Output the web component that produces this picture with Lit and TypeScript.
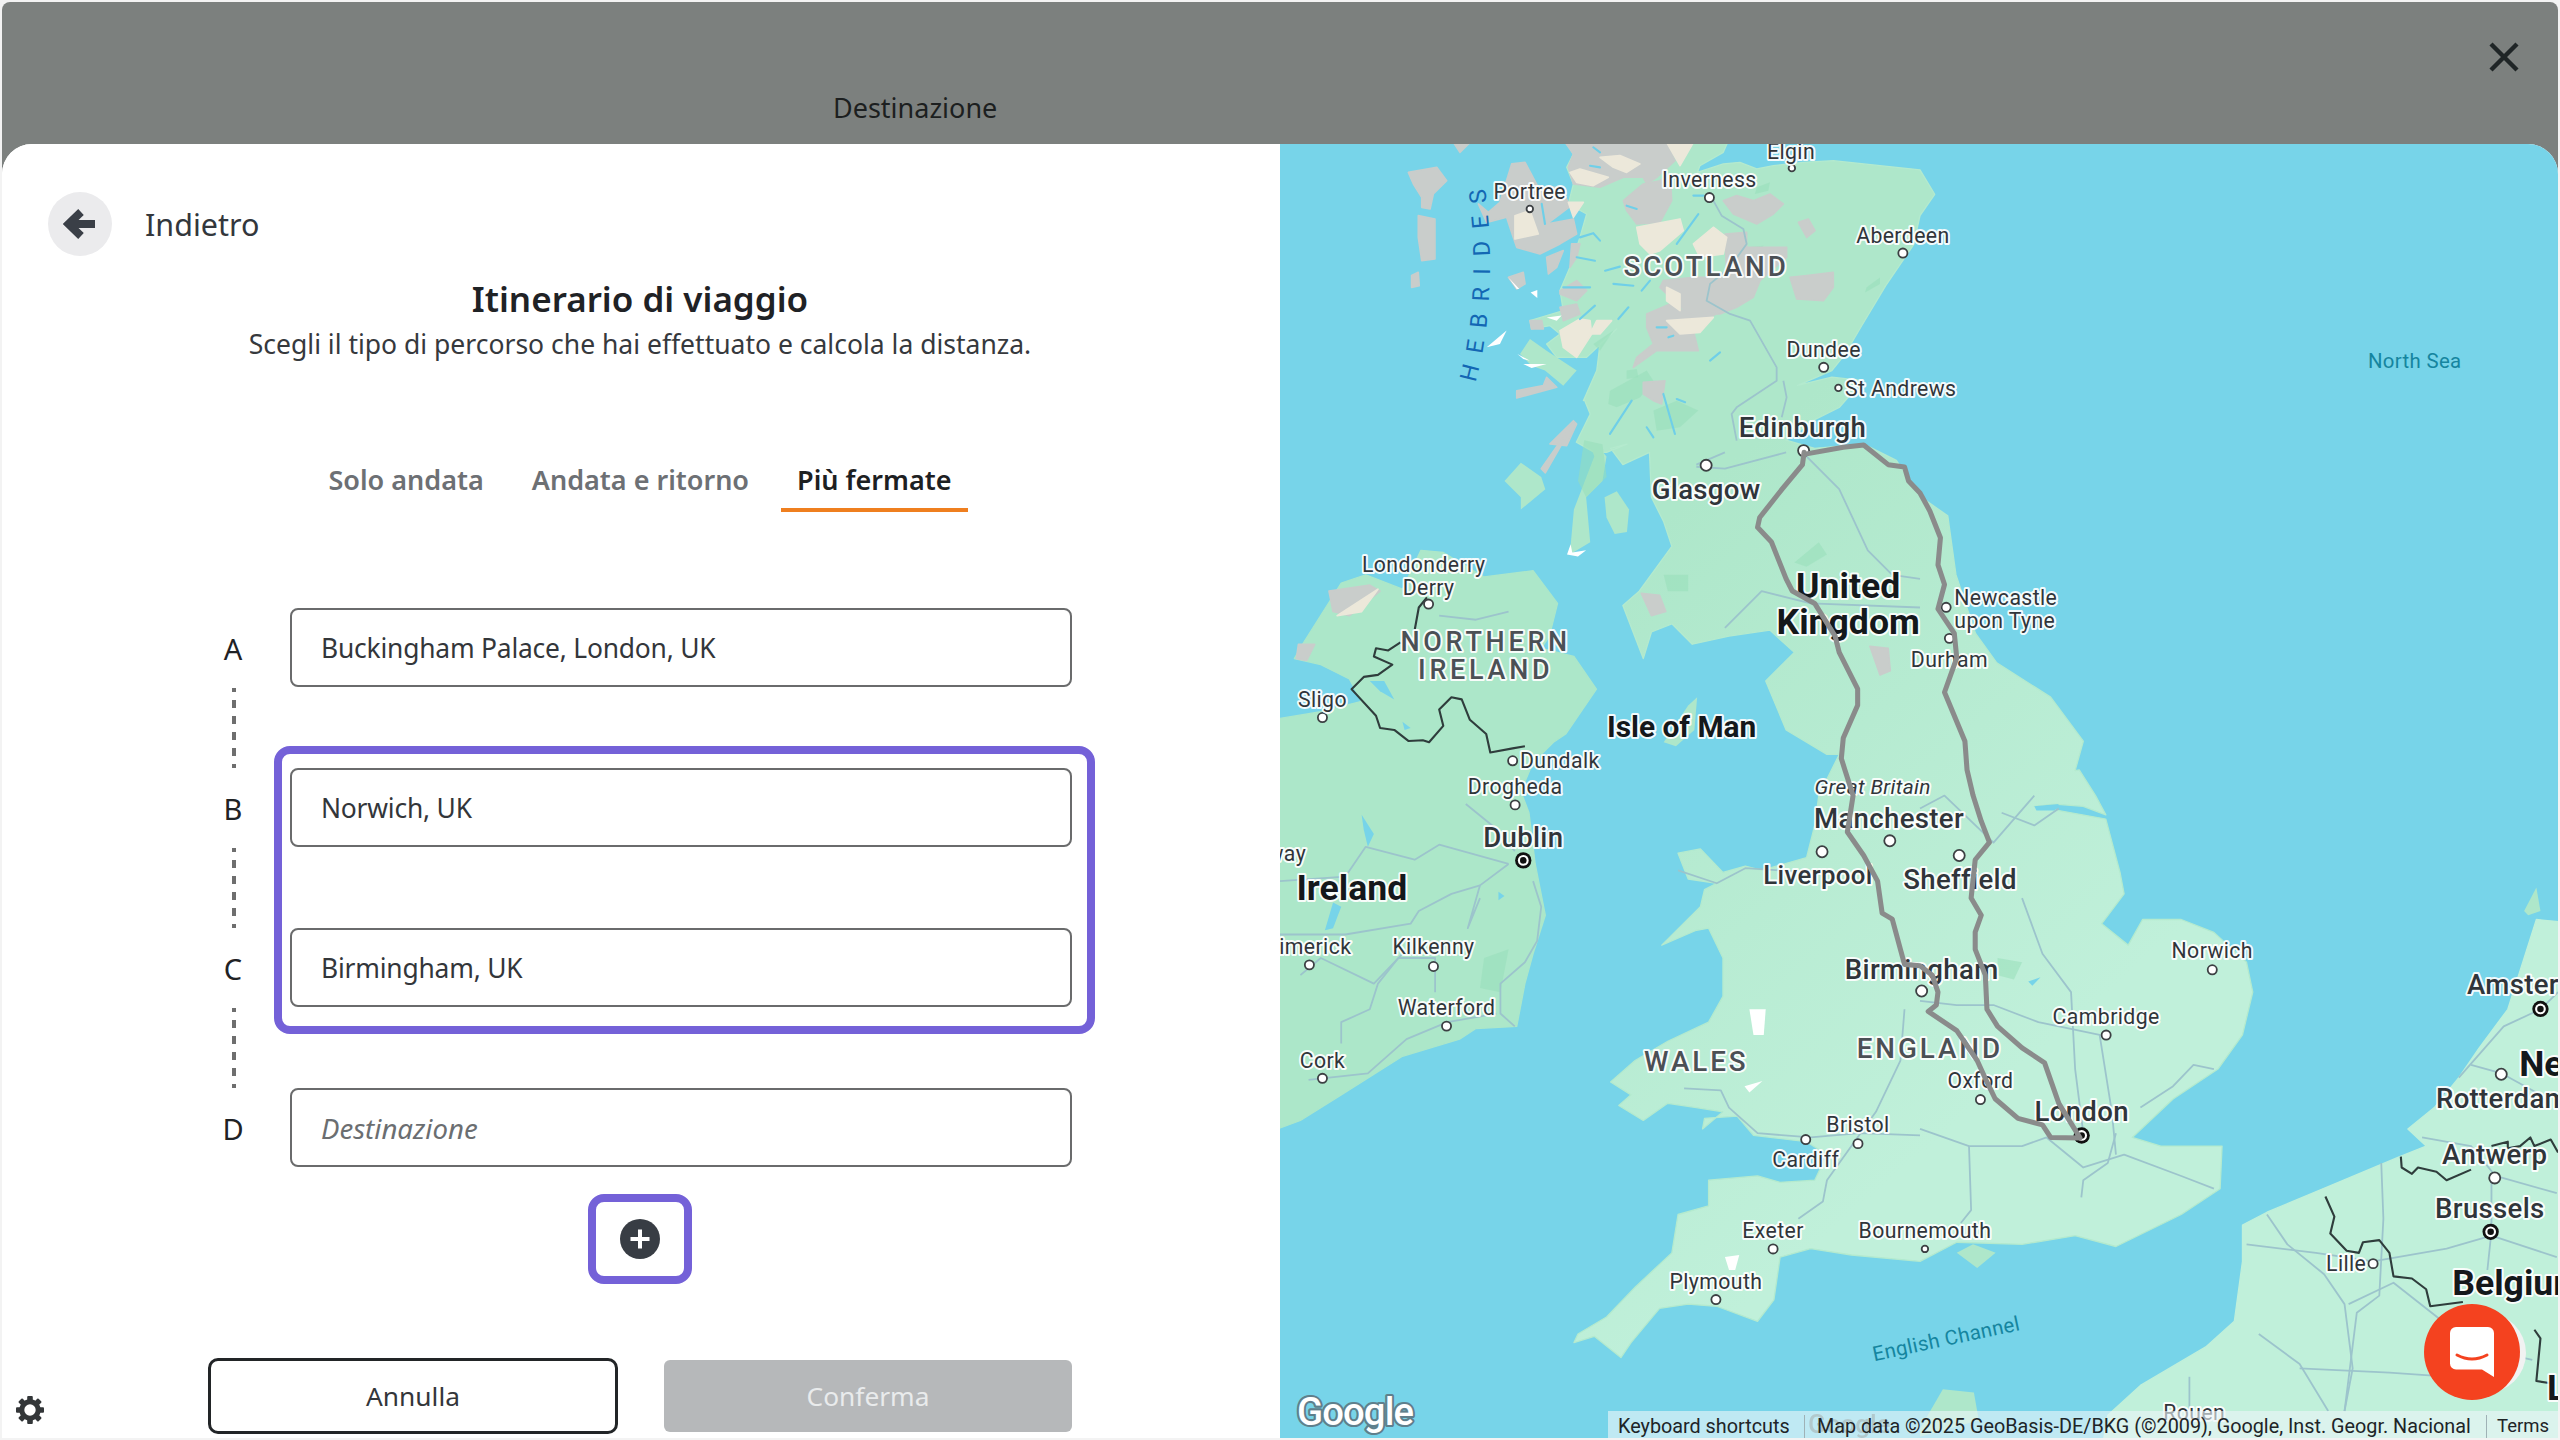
import { LitElement, html, css, svg } from "lit";
import { customElement } from "lit/decorators.js";

type Pt = number[];
const mapper = (ox: number, oy: number, sx: number, sy: number) => (a: Pt) => {
  const out: string[] = [];
  for (let i = 0; i < a.length; i += 2) out.push(`${(ox + a[i] / sx).toFixed(1)},${(oy + a[i + 1] / sy).toFixed(1)}`);
  return out.join(" ");
};
const s = mapper(0, 0, 1, 1);
const z3 = mapper(784, 79.6, 4, 4);
const z4 = mapper(784, 471.6, 4, 3.82);
const z5 = mapper(1176, 471.6, 4, 3.82);
const zA = mapper(833, 88.2, 4.898, 4.898);

const GB = [
  zA([615, -10, 1105, -10, 1090, 25, 1020, 65, 1012, 85, 1090, 60, 1140, 55, 1190, 75, 1240, 65, 1330, 55, 1420, 50, 1560, 65]),
  s([1176, 104, 1185, 119, 1176, 132, 1172, 150, 1155, 175, 1140, 200, 1130, 217, 1122, 227, 1101, 236, 1122, 231, 1140, 233, 1134, 241, 1126.5, 249.6, 1111.5, 257, 1094, 269.6, 1111.5, 274.6, 1141.5, 272, 1161.5, 282, 1176, 304, 1193, 316, 1198, 352, 1210, 388, 1223, 406, 1256, 427, 1276, 454, 1271, 472]),
  z5([390, 0, 430, 60, 455, 105, 400, 85, 330, 80, 280, 85, 340, 95, 455, 115, 490, 240, 500, 290, 445, 360, 510, 410, 545, 350, 640, 350, 720, 380, 800, 450, 815, 520, 790, 620, 730, 700, 620, 770, 520, 860, 590, 880, 740, 880, 735, 980, 640, 1040, 480, 1115, 380, 1090, 250, 1110, 90, 1105, 0, 1150]),
  z4([1400, 1135, 1300, 1120, 1225, 1140, 1210, 1240, 1170, 1290, 1070, 1255, 1000, 1250, 930, 1260, 860, 1340, 835, 1375, 770, 1325, 720, 1340, 730, 1320, 800, 1280, 870, 1210, 960, 1130, 975, 1040, 1050, 1020, 1050, 960, 1170, 950, 1225, 965, 1310, 960, 1340, 900, 1290, 870, 1160, 855, 1120, 810, 1040, 815, 1035, 840, 1085, 800, 1020, 790, 950, 780, 890, 820, 830, 785, 860, 760, 810, 730, 870, 680, 950, 635, 1050, 590, 1085, 530, 1085, 440, 1050, 370, 1020, 375, 935, 410, 1030, 320, 1040, 280, 1070, 265, 1000, 255, 975, 195, 1030, 185, 1085, 240, 1140, 225, 1180, 235, 1290, 205, 1310, 130, 1320, 60]),
  z3([1370, 1530, 1340, 1530, 1240, 1470, 1190, 1350, 1260, 1280, 1200, 1225, 1100, 1240, 1010, 1260, 960, 1210, 910, 1230, 890, 1295, 840, 1165, 880, 1130, 960, 1020, 940, 960, 910, 900, 905, 790, 840, 820, 810, 780, 850, 770, 800, 790, 770, 790, 726, 765, 760, 696, 745, 660]),
  zA([670, 770, 710, 680, 720, 600, 770, 555, 680, 640, 590, 640, 560, 600, 600, 570, 570, 545, 515, 555, 510, 530, 610, 500, 600, 440, 630, 370, 660, 280, 680, 210, 625, 180, 640, 120, 620, 70, 640, 30]),
].join(" ");

const IRL = [
  z3([-20, 1445, 100, 1425, 200, 1400, 170, 1345, 100, 1310, 35, 1295, 55, 1260, 150, 1110, 210, 1090, 300, 1125, 345, 1030, 400, 1035, 500, 1095, 620, 1080, 680, 1160, 660, 1240, 640, 1270, 720, 1290, 775, 1370, 700, 1480, 670, 1500, 620, 1550]),
  z4([590, 50, 610, 100, 625, 220, 650, 340, 620, 430, 600, 500, 580, 600, 480, 605, 440, 630, 300, 670, 150, 760, 50, 820, -20, 845]),
].join(" ");

const CONT = z5([1620, 360, 1510, 350, 1480, 440, 1440, 560, 1370, 650, 1320, 720, 1260, 790, 1195, 840, 1240, 880, 1175, 905, 1000, 975, 850, 1035, 790, 1065, 790, 1150, 770, 1290, 700, 1350, 540, 1440, 460, 1510, 440, 1620, 1620, 1620]);

const islands = [
  z3([750, 740, 800, 800, 790, 860, 750, 900, 760, 1010, 710, 1040, 720, 930, 770, 800]),
  z3([795, 900, 825, 885, 855, 930, 850, 985, 820, 990, 800, 950]),
  z3([550, 860, 590, 815, 640, 850, 650, 880, 590, 930, 590, 900]),
  z3([640, 830, 720, 715, 690, 770, 650, 840]),
  zA([480, 630, 510, 585, 560, 620, 650, 680, 610, 725, 555, 680, 515, 665]),
  z3([940, 1500, 1000, 1410, 1022, 1390, 1015, 1470, 970, 1510]),
  z5([90, 1130, 130, 1110, 185, 1130, 140, 1165]),
  z5([1480, 330, 1510, 275, 1520, 330, 1490, 340]),
  s([1176, 875, 1190, 851, 1209, 853, 1212, 870, 1176, 880]),
];
const grey = [
  zA([145, 85, 230, 70, 260, 110, 220, 150, 210, 195, 185, 190, 185, 160, 160, 120]),
  zA([175, 215, 225, 225, 225, 345, 185, 350, 175, 280]),
  zA([155, 395, 175, 385, 178, 425, 155, 430]),
  zA([280, -5, 330, -5, 300, 25]),
  zA([355, 180, 385, 205, 420, 175, 455, 60, 495, 55, 535, 130, 600, 130, 625, 175, 640, 180, 600, 210, 560, 240, 640, 225, 650, 270, 600, 300, 540, 330, 470, 310, 460, 280, 440, 220, 380, 235]),
  zA([560, 340, 610, 320, 590, 370, 565, 390]),
  zA([445, 400, 490, 385, 495, 420, 470, 435]),
  zA([615, -5, 920, -5, 945, 50, 890, 100, 860, 120, 850, 100, 790, 100, 720, 130, 640, 120, 625, 70, 640, 30]),
  zA([790, 170, 850, 120, 900, 110, 930, 90, 935, 170, 900, 235, 830, 240, 800, 200]),
  zA([1090, 170, 1130, 155, 1180, 170, 1230, 150, 1270, 180, 1240, 210, 1190, 240, 1120, 210]),
  zA([1315, 235, 1345, 225, 1365, 260, 1340, 280]),
  zA([1290, 400, 1340, 395, 1420, 385, 1420, 430, 1390, 470, 1310, 465]),
  zA([910, 410, 1000, 400, 1100, 400, 1160, 310, 1280, 310, 1280, 340, 1200, 410, 1180, 460, 1130, 490, 1080, 510, 990, 510, 950, 480, 900, 430]),
  zA([1095, 270, 1160, 265, 1160, 320, 1100, 400]),
  zA([860, 510, 930, 480, 990, 510, 1085, 500, 1050, 520, 1000, 560, 1015, 620, 940, 620, 890, 620, 820, 670, 830, 640, 880, 600, 860, 550]),
  zA([850, 715, 915, 710, 905, 780, 880, 770, 850, 750]),
  zA([600, 440, 650, 410, 680, 440, 650, 470, 600, 450]),
  zA([600, 490, 650, 480, 660, 510, 610, 530]),
  zA([635, 300, 660, 300, 650, 340, 630, 370]),
  zA([470, 740, 550, 725, 560, 700, 590, 730, 470, 762]),
  zA([510, 530, 545, 530, 550, 555, 515, 555]),
  zA([570, 900, 640, 830, 650, 840, 620, 905]),
  z3([640, 830, 720, 715, 690, 770, 650, 840]),
  z3([120, 1130, 220, 1115, 245, 1130, 170, 1190, 130, 1180]),
  z3([45, 1260, 85, 1260, 65, 1300, 40, 1295]),
  z3([885, 1135, 930, 1140, 945, 1180, 910, 1190]),
  z3([1445, 1265, 1490, 1270, 1495, 1325, 1470, 1335]),
];
const beige = [
  zA([720, 40, 780, 35, 840, 60, 800, 85, 760, 70]),
  zA([630, 85, 660, 75, 745, 100, 700, 125, 650, 115]),
  zA([625, 175, 670, 175, 640, 220]),
  zA([920, -5, 1000, -5, 960, 65]),
  zA([830, 250, 960, 225, 970, 260, 900, 320, 870, 330, 840, 300]),
  zA([1000, 300, 1060, 250, 1100, 280, 1090, 330, 1020, 340]),
  zA([920, 530, 1060, 520, 1020, 565, 960, 570]),
  zA([600, 560, 660, 525, 690, 530, 695, 570, 650, 640, 610, 610]),
  zA([690, 570, 710, 530, 755, 530, 720, 570]),
  zA([920, 430, 960, 450, 960, 500, 920, 470]),
  zA([465, 215, 510, 200, 535, 270, 465, 285]),
  z3([140, 1190, 240, 1125, 200, 1180]),
];
const white = [
  zA([380, 610, 440, 560, 420, 600]),
  zA([512, 445, 532, 438, 532, 462]),
  zA([445, 400, 478, 435, 470, 435]),
  zA([560, 520, 605, 515, 590, 530]),
  zA([472, 630, 510, 650, 490, 645]),
  zA([490, 660, 560, 660, 515, 672]),
  z3([725, 770, 745, 800, 735, 845, 745, 800]),
  z3([703, 1040, 712, 1015, 716, 1035, 750, 1030, 730, 1045]),
  z4([1150, 560, 1190, 560, 1185, 620, 1160, 620]),
  z4([1138, 740, 1182, 728, 1150, 755]),
  z4([1090, 1140, 1125, 1135, 1115, 1170, 1100, 1170]),
];
const deep = [
  zA([800, 680, 830, 675, 835, 700, 800, 705]),
  zA([750, 740, 860, 680, 880, 710, 840, 760, 770, 790, 745, 780]),
  zA([880, 800, 950, 770, 1015, 800, 960, 850, 890, 860]),
  zA([1190, 130, 1230, 115, 1225, 140, 1185, 150]),
  zA([1520, 430, 1560, 400, 1560, 420, 1515, 445]),
  zA([1160, 310, 1210, 305, 1200, 330]),
  zA([700, 600, 760, 560, 720, 620]),
  z3([745, 760, 790, 770, 800, 850, 750, 900, 730, 860]),
  z3([940, 1090, 1000, 1090, 1000, 1130, 950, 1130]),
  z3([1260, 1060, 1320, 1010, 1340, 1040, 1290, 1070]),
  z5([190, 440, 250, 450, 230, 490, 190, 480]),
  z4([500, 440, 560, 420, 540, 520, 490, 510]),
];
const lochs = [
  zA([1015, 210, 950, 300]),
  zA([660, 280, 700, 268, 720, 290]),
  zA([650, 340, 705, 350]),
  zA([735, 380, 780, 368]),
  zA([760, 420, 820, 425]),
  zA([610, 430, 690, 430]),
  zA([845, 440, 870, 410]),
  zA([660, 525, 705, 485]),
  zA([775, 525, 805, 490]),
  zA([890, 550, 920, 550]),
  zA([925, 580, 940, 575]),
  zA([1050, 650, 1080, 625]),
  zA([910, 750, 945, 870]),
  zA([815, 770, 750, 870]),
  zA([950, 765, 975, 775]),
  zA([860, 850, 880, 880]),
  zA([545, 180, 555, 240]),
  zA([700, 10, 720, 25]),
  zA([690, 65, 720, 70]),
  zA([800, 185, 830, 195]),
  zA([1000, 155, 1030, 155]),
];
const lakes = [
  z3([220, 1350, 255, 1350, 280, 1395, 245, 1375]),
  z3([300, 1450, 320, 1465, 305, 1470]),
  z4([200, 105, 230, 150, 215, 180, 205, 140]),
  z4([130, 310, 150, 320, 130, 370, 110, 375]),
  z4([535, 285, 550, 295, 535, 305]),
  z5([280, 85, 340, 80, 330, 95, 285, 95]),
  z5([265, 495, 295, 485, 275, 505]),
];
const roads = [
  zA([1060, 170, 1085, 215, 1150, 255, 1160, 300, 1110, 370, 1050, 420, 1040, 470, 1110, 510, 1170, 530, 1250, 670, 1250, 710, 1130, 790, 1115, 810, 1130, 890]),
  zA([1270, 710, 1280, 760, 1265, 820]),
  z3([1020, 825, 1090, 830, 1240, 790]),
  z3([1090, 790, 1020, 820]),
  z3([1290, 800, 1370, 880, 1440, 1030, 1500, 1090, 1568, 1100]),
  z3([1090, 1220, 1180, 1130, 1300, 1160, 1568, 1170]),
  z3([390, 1190, 480, 1200, 560, 1180]),
  z4([0, 260, 160, 250, 210, 180, 330, 210, 390, 175, 560, 220]),
  z4([620, 260, 640, 320, 630, 400, 600, 450, 540, 500, 540, 570, 575, 600]),
  z4([560, 220, 490, 270, 460, 370, 490, 300]),
  z4([0, 385, 160, 385, 320, 360, 340, 330, 420, 290, 490, 270]),
  z4([50, 480, 100, 440, 230, 500, 300, 430]),
  z4([150, 640, 150, 590, 220, 560, 240, 500, 290, 440, 380, 440, 380, 520]),
  z4([70, 725, 215, 710, 310, 630, 410, 590, 530, 570]),
  z4([455, 80, 520, 130, 575, 190]),
  z4([975, 235, 1070, 265, 1140, 230, 1300, 240]),
  z4([990, 745, 1080, 750, 1100, 790, 1170, 850, 1300, 860, 1420, 850, 1568, 855]),
  z4([1270, 1050, 1330, 1010, 1340, 960, 1400, 880, 1460, 800, 1520, 680, 1530, 560]),
  z5([0, 90, 60, 60, 180, 170, 280, 60]),
  z5([200, 100, 280, 130, 340, 90]),
  z5([250, 300, 300, 430, 370, 520, 380, 700, 400, 850]),
  z5([0, 540, 90, 550, 180, 550, 290, 590, 440, 620, 470, 800, 480, 900]),
  z5([0, 840, 120, 880, 250, 880, 310, 860, 400, 930, 500, 900, 640, 950, 720, 980]),
  z5([120, 880, 125, 1030, 100, 1060]),
  z5([480, 850, 460, 920, 400, 960, 395, 1000]),
  z5([540, 790, 620, 740, 670, 690, 720, 700]),
  z5([850, 1040, 900, 1110, 990, 1180, 1040, 1250, 1060, 1400, 1040, 1500]),
  z5([1130, 920, 1135, 1050, 1125, 1230, 1070, 1270, 1040, 1500]),
  z5([800, 1110, 970, 1130, 1110, 1150, 1290, 1120, 1400, 1090, 1560, 1140]),
  z5([1400, 960, 1400, 1080, 1390, 1170]),
  z5([1050, 1250, 1160, 1200, 1280, 1290, 1360, 1350, 1500, 1380]),
  z5([830, 1320, 930, 1390, 1000, 1500]),
  z5([660, 1420, 660, 1500]),
  z5([930, 1400, 1150, 1410, 1300, 1420]),
  z5([1320, 720, 1430, 600, 1520, 560, 1563, 520]),
  z5([1230, 860, 1350, 880, 1410, 950, 1560, 990]),
  z5([1350, 690, 1425, 710, 1520, 760]),
];
const borders = [
  z3([360, 1145, 340, 1170, 330, 1225]),
  z3([295, 1255, 265, 1275, 235, 1270, 230, 1290, 275, 1310, 240, 1335, 205, 1340, 175, 1370, 235, 1435, 245, 1465, 280, 1470, 315, 1497, 350, 1495, 365, 1500, 400, 1460, 390, 1420, 420, 1390, 445, 1395, 465, 1445, 505, 1480, 515, 1525, 570, 1515, 600, 1510]),
  z5([993, 998, 1015, 1045, 1005, 1085, 1045, 1125, 1075, 1130, 1085, 1105, 1125, 1100, 1150, 1130, 1160, 1185, 1205, 1190, 1240, 1215, 1250, 1255, 1330, 1245]),
  z5([1505, 1310, 1520, 1330, 1510, 1430, 1545, 1435]),
  z5([1178, 905, 1180, 930, 1205, 945, 1220, 930, 1265, 940, 1290, 960, 1350, 935]),
  z5([1400, 880, 1440, 870, 1440, 885, 1470, 880, 1495, 860, 1505, 880, 1545, 865, 1563, 895]),
];
const route = s([1105, 277, 1104, 284.6, 1091.5, 299.6, 1077.75, 317, 1076.5, 323, 1085, 332, 1094, 354.6, 1097.75, 362, 1111.5, 369.6, 1124, 389.6, 1126.5, 399.6, 1137.75, 422, 1137.75, 432, 1129, 452, 1127.75, 464.6, 1130, 471.6, 1135, 487.3, 1131.5, 509.6, 1141.5, 524, 1150, 539.7, 1152.75, 559.3, 1159, 563, 1164, 581.5, 1166.5, 590.7, 1176, 591.5, 1183.5, 597.3, 1187, 607.7, 1186, 615.6, 1181, 619.5, 1198.5, 631.3, 1211, 649.6, 1217, 662.7, 1222, 673, 1236, 685, 1251, 689, 1256, 696.7, 1274, 697, 1261, 675.8, 1252.25, 651, 1238.5, 641.8, 1223.5, 628.7, 1217, 618.2, 1216, 597.3, 1209.75, 581.5, 1209.75, 571, 1213.5, 560.6, 1207.25, 550, 1209.75, 526.6, 1218.5, 516, 1213.5, 503, 1208.5, 487.3, 1204.75, 471.6, 1203.5, 454, 1191, 424, 1198.5, 403, 1197, 388, 1187, 373, 1191, 358, 1187, 346, 1188.5, 329.4, 1182, 313, 1176, 302, 1169, 294.6, 1166.5, 286, 1156.5, 284.6, 1141.5, 272.6, 1129, 274, 1106.5, 278]);

type Label = [string, number, number, string, string?];
const labels: Label[] = [
  ["Elgin", 1097, 93, "c"], ["Inverness", 1047, 110, "c"], ["Portree", 937, 117.5, "c"], ["Aberdeen", 1165.5, 144, "c"],
  ["SCOTLAND", 1045, 163, "r r1"], ["Dundee", 1117, 214, "c"], ["St Andrews", 1130, 238, "c", "start"],
  ["Edinburgh", 1104, 262, "m"], ["Glasgow", 1045, 300, "m"], ["United", 1132, 359, "b"], ["Kingdom", 1132, 381, "b"],
  ["Londonderry", 872, 346, "c"], ["Derry", 875, 360, "c"], ["NORTHERN", 910, 393.5, "r r2"], ["IRELAND", 910, 410.5, "r r2"],
  ["Sligo", 810, 428.5, "c"], ["Isle of Man", 1030, 445, "b2"], ["Dundalk", 931, 466, "c", "start"],
  ["Newcastle", 1197, 366, "c", "start"], ["upon Tyne", 1197, 380, "c", "start"], ["Durham", 1194, 404, "c"],
  ["Great Britain", 1147, 482, "i"], ["Manchester", 1157, 501.5, "m"], ["Liverpool", 1113.5, 536, "m m2"], ["Sheffield", 1200.5, 539, "m"],
  ["Drogheda", 928, 481.5, "c"], ["Dublin", 933, 513, "m"], ["Ireland", 828, 544, "b"], ["Galway", 800, 523, "c", "end"],
  ["Limerick", 802, 579.5, "c"], ["Kilkenny", 878, 580, "c"], ["Waterford", 886, 617, "c"], ["Cork", 810, 649.5, "c"],
  ["Birmingham", 1177, 594, "m"], ["Norwich", 1355, 582.5, "c"], ["Cambridge", 1290, 622.5, "c"], ["ENGLAND", 1182, 642, "r r1"],
  ["Oxford", 1213, 662, "c"], ["London", 1275, 681, "m"], ["WALES", 1039, 650, "r r1"], ["Bristol", 1138, 689, "c"],
  ["Cardiff", 1106, 710, "c"], ["Exeter", 1086, 754, "c"], ["Bournemouth", 1179, 754, "c"], ["Plymouth", 1051, 785, "c"],
  ["Amsterdam", 1511, 603, "m", "start"], ["Netherlands", 1543, 652, "b", "start"], ["Rotterdam", 1492, 673, "m", "start"],
  ["Antwerp", 1528, 707, "m"], ["Brussels", 1525, 740, "m"], ["Lille", 1437, 774, "c"], ["Belgium", 1502, 786, "b", "start"],
  ["Luxembourg", 1560, 850, "b", "start"], ["Rouen", 1344, 865, "c"],
];
type Pin = [number, number, string];
const pins: Pin[] = [
  [1097.5, 103, "sm"], [1047, 121, "md"], [937, 128, "sm"], [1165.5, 155, "md"], [1117, 225, "md"], [1126, 237.6, "sm"],
  [1104.7, 276, "lg"], [1045, 285, "lg"], [875, 370, "md"], [810, 439.5, "md"], [926.5, 466, "md"], [1192, 372, "md"],
  [1194, 391, "md"], [1157.5, 515, "lg"], [1116, 521.7, "lg"], [1200, 524, "lg"], [928, 493, "md"], [802, 591, "md"],
  [878, 592, "md"], [886, 628.5, "md"], [810, 660.5, "md"], [1177, 607, "lg"], [1355, 594, "md"], [1290, 634, "md"],
  [1213, 673.5, "md"], [1138, 700.5, "md"], [1106, 698, "md"], [1086, 765, "md"], [1179, 765, "sm"], [1051, 796, "md"],
  [1532, 658, "lg"], [1528, 721.5, "lg"], [1453.5, 774, "md"],
];
const capitals: number[][] = [[933, 527], [1556, 618], [1525.5, 754.5], [1275, 695.5]];
const hebPath = `M ${833 + 345 / 4.898} ${88.2 + 715 / 4.898} C ${833 + 395 / 4.898} ${88.2 + 560 / 4.898} ${833 + 402 / 4.898} ${88.2 + 300 / 4.898} ${833 + 372 / 4.898} ${88.2 + 115 / 4.898}`;

@customElement("app-root")
export class AppRoot extends LitElement {
  static styles = css`
    :host { display: block; width: 2560px; height: 1440px; overflow: hidden; background: #f3f3f3; font-family: "Noto Sans", sans-serif; color: #26292c; }
    * { box-sizing: border-box; }
    .frame { margin: 2px 2px 0; height: 1436px; background: #7c807e; border-radius: 8px 8px 0 0; display: flex; flex-direction: column; }
    .top { height: 142px; flex: none; display: flex; position: relative; }
    .top-title { margin: 86px 0 0 831px; font-size: 27px; line-height: 40px; color: #1c1f20; }
    .close { position: absolute; left: 2484px; top: 37px; width: 36px; height: 36px; }
    .close path { stroke: #1f2526; stroke-width: 4.4; fill: none; }
    .card { flex: 1; display: flex; min-height: 0; border-radius: 30px 30px 0 0; overflow: hidden; background: #fff; }
    .left { width: 1278px; flex: none; position: relative; padding: 48px 2px 0 0; display: flex; flex-direction: column; background: #fff; }
    .back { display: flex; align-items: center; gap: 33px; margin-left: 46px; height: 64px; font-size: 30.5px; color: #33373c; }
    .circle { width: 64px; height: 64px; border-radius: 50%; background: #ebebed; display: flex; align-items: center; justify-content: center; }
    .circle svg { width: 34px; height: 34px; }
    .circle path { stroke: #3a3f47; stroke-width: 8; fill: none; }
    h1 { margin: 21px 0 0; text-align: center; font-size: 35px; line-height: 44px; font-weight: 600; color: #1f2225; }
    .sub { margin-top: 5px; text-align: center; font-size: 26.5px; line-height: 36px; color: #36393d; }
    .tabs { margin-top: 98px; display: flex; justify-content: center; gap: 16px; }
    .tab { padding: 0 16px 8px; line-height: 40px; font-size: 27px; font-weight: 600; color: #6d7074; border-bottom: 4px solid transparent; }
    .tab.on { color: #1d2022; border-bottom-color: #ef7f1f; }
    .stops { margin: 96px 0 0 201px; width: 869px; display: grid; grid-template-columns: 60px 782px; column-gap: 27px; position: relative; }
    .letter { display: flex; align-items: center; justify-content: center; font-size: 29px; color: #1f2225; padding-top: 2px; }
    .field { height: 79px; border: 2.4px solid #6a6b6c; border-radius: 8px; display: flex; align-items: center; padding-left: 29px; font-size: 26.4px; letter-spacing: -.2px; color: #33363a; background: #fff; }
    .field.ph { font-style: italic; color: #6b6e71; font-size: 27.6px; letter-spacing: 0; }
    .dash { height: 80px; width: 4px; margin: 1px 0 0 29px; justify-self: start; background: repeating-linear-gradient(#6e6e6e 0 4px, transparent 4px 12px, #6e6e6e 12px 16px); }
    .gap { height: 81px; }
    .mark { position: absolute; border: 8px solid #7461d8; pointer-events: none; }
    .mark.group { left: 71px; top: 138px; width: 821px; height: 288px; border-radius: 16px; }
    .addrow { margin: 27px 0 0 586px; }
    .add { width: 104px; height: 90px; border: 8px solid #7461d8; border-radius: 16px; display: flex; align-items: center; justify-content: center; }
    .add svg { width: 40px; height: 40px; }
    .actions { margin: 74px 0 0 206px; display: flex; align-items: center; gap: 46px; }
    .btn { display: flex; align-items: center; justify-content: center; font-size: 26.3px; }
    .btn.ghost { width: 410px; height: 76px; border: 3px solid #222527; border-radius: 10px; color: #33363a; }
    .btn.solid { width: 408px; height: 72px; background: #b6b8ba; border-radius: 6px; color: #e9ebec; }
    .gear { position: absolute; left: 14px; top: 1252px; width: 28px; height: 28px; }
    .map { flex: 1; position: relative; overflow: hidden; background: #77d4e9; }
    .map > svg { display: block; width: 100%; height: 100%; }
    .terrain { filter: blur(.45px); }
    .land { stroke-width: 0.8; stroke-linejoin: round; }
    .gb { fill: url(#gbfill); stroke: #b4eace; }
    .ie { fill: #ace7c9; stroke: #ace7c9; }
    .ct { fill: #c0f0da; stroke: #c0f0da; }
    .isl { fill: #aee7ca; }
    .grey { fill: #c9cdcb; stroke: #c9cdcb; stroke-width: 1; stroke-linejoin: round; }
    .beige { fill: #ece8da; stroke: #ece8da; stroke-width: 1; stroke-linejoin: round; }
    .white { fill: #fff; }
    .deep { fill: #97deba; opacity: .55; }
    .water { fill: #77d4e9; }
    .wline { fill: none; stroke: #6fcfe8; stroke-width: 1.3; stroke-linecap: round; }
    .road { fill: none; stroke: #9cc4cc; stroke-width: 1.1; stroke-linejoin: round; }
    .border { fill: none; stroke: #2f3d3c; stroke-width: 1.3; stroke-linejoin: round; }
    .route { fill: none; stroke: #8a8b8b; stroke-width: 3.1; stroke-linejoin: round; stroke-linecap: round; }
    text { font-family: Roboto, sans-serif; dominant-baseline: central; paint-order: stroke; stroke: rgba(255,255,255,.92); stroke-width: 2.4px; stroke-linejoin: round; fill: #30353a; }
    .c { font-size: 13px; font-weight: 400; letter-spacing: .25px; }
    .m { font-size: 16.9px; font-weight: 500; letter-spacing: .2px; }
    .m.m2 { font-size: 15.8px; }
    .b { font-size: 21.8px; font-weight: 700; fill: #14181b; }
    .b2 { font-size: 18.3px; font-weight: 700; fill: #14181b; }
    .i { font-size: 12.8px; font-style: italic; letter-spacing: .2px; }
    .r { font-weight: 500; fill: #4b5055; }
    .r1 { font-size: 17px; letter-spacing: 1.8px; }
    .r2 { font-size: 16.5px; letter-spacing: 2.3px; }
    .sea { font-size: 12.5px; fill: #15859f; stroke: none; letter-spacing: .2px; }
    .heb-t { font-size: 14.4px; fill: #1367b4; stroke: none; letter-spacing: 7.6px; dominant-baseline: alphabetic; }
    .ghost-g { font-size: 23.4px; font-weight: 500; fill: #ffffff; stroke: #5f7f8c; stroke-width: 2.6px; letter-spacing: -.5px; }
    .pin { fill: #fff; stroke: #3c4043; stroke-width: 1.1; }
    .cap-o { fill: #111; }
    .cap-w { fill: #fff; }
    .attr { position: absolute; left: 328px; right: 0; bottom: 0; height: 27px; background: rgba(235,245,248,.62); font-family: Roboto, sans-serif; font-size: 19.8px; line-height: 27px; color: #202427; }
    .attr span { position: absolute; top: 2px; white-space: nowrap; }
    .attr .terms { font-size: 18.5px; }
    .attr i { position: absolute; top: 4px; bottom: 0; width: 1px; background: #9fb2b6; }
    .attr .ghost-logo { color: #a9b4b4; font-size: 26px; font-weight: 500; top: 0; opacity: .6; }
    .chat-back { position: absolute; left: 1166px; top: 1169px; width: 80px; height: 80px; border-radius: 50%; background: #f1f2f2; }
    .chat { position: absolute; left: 1144px; top: 1160px; width: 96px; height: 96px; border-radius: 50%; background: #f4421f; display: flex; align-items: center; justify-content: center; }
    .chat svg { width: 44px; height: 50px; }
  `;

  private stops = [
    { l: "A", v: "Buckingham Palace, London, UK" },
    { l: "B", v: "Norwich, UK" },
    { l: "C", v: "Birmingham, UK" },
    { l: "D", v: "Destinazione", ph: true },
  ];

  private renderMap() {
    return svg`
      <defs>
        <linearGradient id="gbfill" gradientUnits="userSpaceOnUse" x1="1040" y1="300" x2="1300" y2="600">
          <stop offset="0" stop-color="#aee7ca" />
          <stop offset="1" stop-color="#c0f0da" />
        </linearGradient>
        <path id="hebpath" d=${hebPath} />
      </defs>
      <g class="terrain">
        <polygon class="land gb" points=${GB} />
        <polygon class="land ie" points=${IRL} />
        <polygon class="land ct" points=${CONT} />
        ${islands.map((p) => svg`<polygon class="isl" points=${p} />`)}
        ${deep.map((p) => svg`<polygon class="deep" points=${p} />`)}
        ${grey.map((p) => svg`<polygon class="grey" points=${p} />`)}
        ${beige.map((p) => svg`<polygon class="beige" points=${p} />`)}
        ${white.map((p) => svg`<polygon class="white" points=${p} />`)}
        ${lochs.map((p) => svg`<polyline class="wline" points=${p} />`)}
        ${lakes.map((p) => svg`<polygon class="water" points=${p} />`)}
        ${roads.map((p) => svg`<polyline class="road" points=${p} />`)}
      </g>
      ${borders.map((p) => svg`<polyline class="border" points=${p} />`)}
      ${pins.map(([x, y, k]) => svg`<circle class="pin" cx=${x} cy=${y} r=${k === "sm" ? 2 : k === "md" ? 2.8 : 3.4} />`)}
      ${capitals.map(([x, y]) => svg`<circle class="cap-o" cx=${x} cy=${y} r="5" /><circle class="cap-w" cx=${x} cy=${y} r="3.3" /><circle class="cap-o" cx=${x} cy=${y} r="2" />`)}
      ${labels.map(([t, x, y, k, a]) => svg`<text class=${k} x=${x} y=${y} text-anchor=${a ?? "middle"}>${t}</text>`)}
      <text class="sea" x="1479" y="221" text-anchor="middle">North Sea</text>
      <text class="sea" x="1192" y="820" text-anchor="middle" transform="rotate(-12 1192 820)">English Channel</text>
      <text class="heb-t"><textPath href="#hebpath">HEBRIDES</textPath></text>
      <text class="ghost-g" x="830" y="865" text-anchor="middle">Google</text>
      <polyline class="route" points=${route} />
    `;
  }

  render() {
    return html`
      <div class="frame">
        <div class="top">
          <div class="top-title">Destinazione</div>
          <svg class="close" viewBox="0 0 36 36"><path d="M5 5 L31 31 M31 5 L5 31" /></svg>
        </div>
        <div class="card">
          <div class="left">
            <div class="back">
              <div class="circle">
                <svg viewBox="0 0 34 34"><path d="M32 17 H6 M18 5 L5.5 17 L18 29" /></svg>
              </div>
              <span>Indietro</span>
            </div>
            <h1>Itinerario di viaggio</h1>
            <div class="sub">Scegli il tipo di percorso che hai effettuato e calcola la distanza.</div>
            <div class="tabs">
              <div class="tab">Solo andata</div>
              <div class="tab">Andata e ritorno</div>
              <div class="tab on">Più fermate</div>
            </div>
            <div class="stops">
              ${this.stops.map((st, i) => html`
                <div class="letter">${st.l}</div>
                <div class="field ${st.ph ? "ph" : ""}">${st.v}</div>
                ${i < this.stops.length - 1 ? html`<div class="dash"></div><div class="gap"></div>` : ""}
              `)}
              <div class="mark group"></div>
            </div>
            <div class="addrow">
              <div class="add">
                <svg viewBox="0 0 40 40"><circle cx="20" cy="20" r="20" fill="#383d44" /><path d="M20 10.5 V29.5 M10.5 20 H29.5" stroke="#fff" stroke-width="4" /></svg>
              </div>
            </div>
            <div class="actions">
              <div class="btn ghost">Annulla</div>
              <div class="btn solid">Conferma</div>
            </div>
            <svg class="gear" viewBox="0 0 28 28">
              <g fill="#333638">
                ${[0, 45, 90, 135, 180, 225, 270, 315].map((a) => svg`<rect x="11.2" y="0" width="5.6" height="6" rx="1" transform="rotate(${a} 14 14)" />`)}
              </g>
              <circle cx="14" cy="14" r="8.2" fill="none" stroke="#333638" stroke-width="5" />
            </svg>
          </div>
          <div class="map">
            <svg viewBox="784 88.2 782.75 792.6" preserveAspectRatio="none">${this.renderMap()}</svg>
            <div class="attr">
              <span style="left:10px">Keyboard shortcuts</span>
              <i style="left:196px"></i>
              <span class="ghost-logo" style="left:200px">Google</span>
              <span style="left:209px">Map data ©2025 GeoBasis-DE/BKG (©2009), Google, Inst. Geogr. Nacional</span>
              <i style="left:878px"></i>
              <span class="terms" style="left:889px">Terms</span>
            </div>
            <div class="chat-back"></div>
            <div class="chat">
              <svg viewBox="0 0 44 50">
                <path d="M6 0 H38 a6 6 0 0 1 6 6 V50 L32 42.5 H6 a6 6 0 0 1 -6 -6 V6 a6 6 0 0 1 6 -6 Z" fill="#fff" />
                <path d="M7 28 Q22 36 37 28" fill="none" stroke="#f4421f" stroke-width="3" stroke-linecap="round" />
              </svg>
            </div>
          </div>
        </div>
      </div>
    `;
  }
}
